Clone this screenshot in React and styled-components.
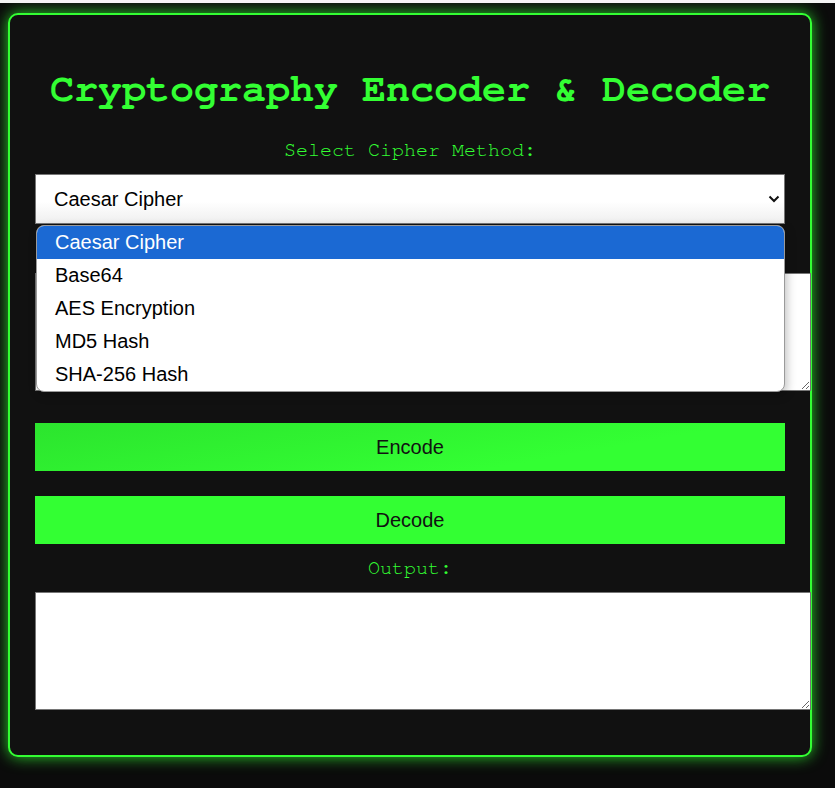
import React, { useState } from 'react';
import styled, { createGlobalStyle } from 'styled-components';

const GlobalStyle = createGlobalStyle`
  html {
    background: #f4f4f4;
  }
  body {
    margin: 3px 0 0;
    padding: 10px 8px 20px;
    min-height: calc(100vh - 3px);
    box-sizing: border-box;
    background: #0b0b0b;
    font-family: "Liberation Sans", Arial, sans-serif;
  }
`;

const monoStack = '"Nimbus Mono PS", "Nimbus Mono L", FreeMono, "Courier New", "Liberation Mono", monospace';

const methods = ['Caesar Cipher', 'Base64', 'AES Encryption', 'MD5 Hash', 'SHA-256 Hash'];

const App = () => {
  const [method] = useState(methods[0]);

  return (
    <>
      <GlobalStyle />
      <Card>
        <Title>Cryptography Encoder &amp; Decoder</Title>

        <FieldLabel $mb={12}>Select Cipher Method:</FieldLabel>
        <SelectWrap>
          <Select value={method} onChange={() => {}}>
            {methods.map((m) => (
              <option key={m}>{m}</option>
            ))}
          </Select>
          <Chevron viewBox="0 0 12 8" aria-hidden="true">
            <path d="M1.5 1.5 L6 6 L10.5 1.5" />
          </Chevron>
          <OptionList>
            {methods.map((m) => (
              <OptionItem key={m} $selected={m === method}>
                {m}
              </OptionItem>
            ))}
          </OptionList>
        </SelectWrap>

        <FieldLabel $mt={12} $mb={14}>Enter Text:</FieldLabel>
        <TextBox />

        <ActionButton $pressed $mt={32}>Encode</ActionButton>
        <ActionButton $mt={25}>Decode</ActionButton>

        <FieldLabel $mt={13} $mb={12}>Output:</FieldLabel>
        <TextBox readOnly />
      </Card>
    </>
  );
};

const Card = styled.div`
  width: 750px;
  padding: 25px 25px 45px;
  background: #111111;
  border: 2px solid #33ff33;
  border-radius: 10px;
  box-shadow: 0 0 15px rgba(51, 255, 51, 0.8);
  display: flex;
  flex-direction: column;
  align-items: flex-start;
`;

const Title = styled.h1`
  align-self: stretch;
  margin: 27px 0;
  font-family: ${monoStack};
  font-size: 40px;
  line-height: 45px;
  font-weight: bold;
  color: #33ff33;
  text-align: center;
  white-space: nowrap;
`;

const FieldLabel = styled.label`
  align-self: stretch;
  display: block;
  margin: ${(p) => p.$mt || 0}px 0 ${(p) => p.$mb || 0}px;
  font-family: ${monoStack};
  font-size: 20px;
  line-height: 23px;
  color: #33ff33;
  text-align: center;
`;

const SelectWrap = styled.div`
  position: relative;
  align-self: stretch;
  height: 50px;
`;

const Select = styled.select`
  appearance: none;
  width: 100%;
  height: 50px;
  margin: 0;
  padding: 0 40px 0 18px;
  border: 1px solid #767676;
  border-radius: 0;
  background: linear-gradient(#ffffff 55%, #efefef);
  font-family: "Liberation Sans", Arial, sans-serif;
  font-size: 20px;
  color: #000;
`;

const Chevron = styled.svg`
  position: absolute;
  right: 5px;
  top: 21px;
  width: 12px;
  height: 8px;
  fill: none;
  stroke: #111;
  stroke-width: 2;
  pointer-events: none;
`;

const OptionList = styled.ul`
  position: absolute;
  top: calc(100% + 1px);
  left: 1px;
  right: 0;
  z-index: 2;
  margin: 0;
  padding: 0;
  list-style: none;
  background: #fff;
  border: 1px solid #9a9a9a;
  border-radius: 8px;
  overflow: hidden;
  box-shadow: 2px 3px 10px rgba(0, 0, 0, 0.25);
`;

const OptionItem = styled.li`
  height: 33px;
  padding: 0 18px;
  display: flex;
  align-items: center;
  font-family: "Liberation Sans", Arial, sans-serif;
  font-size: 20px;
  color: ${(p) => (p.$selected ? '#ffffff' : '#000000')};
  background: ${(p) => (p.$selected ? '#1b69d3' : 'transparent')};
`;

const TextBox = styled.textarea`
  display: block;
  width: 100%;
  height: 92px;
  margin: 0;
  padding: 12px;
  border: 1px solid #767676;
  border-radius: 0;
  background: #fff;
  font-family: "Liberation Sans", Arial, sans-serif;
  font-size: 16px;
`;

const ActionButton = styled.button`
  align-self: stretch;
  height: 48px;
  margin: ${(p) => p.$mt || 0}px 0 0;
  border: none;
  border-radius: 0;
  background: ${(p) =>
    p.$pressed ? 'linear-gradient(170deg, #2ce42e, #33ff33 70%)' : '#33ff33'};
  color: #111;
  font-family: "Liberation Sans", Arial, sans-serif;
  font-size: 20px;
  cursor: pointer;
`;

export default App;
